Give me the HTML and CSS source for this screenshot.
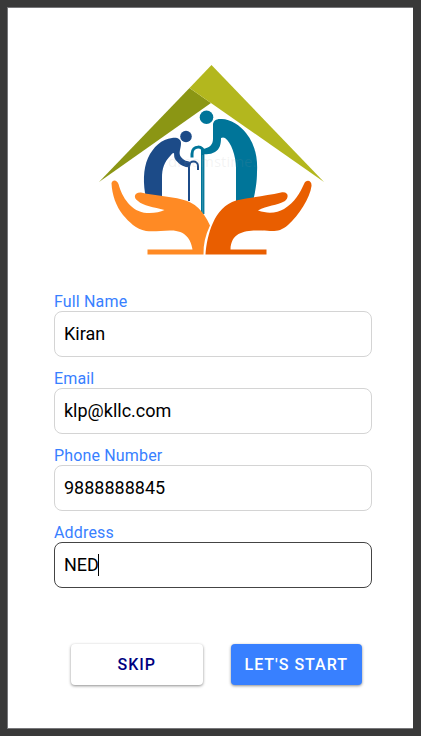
FILE: index.html
```html
<!DOCTYPE html>
<html lang="en">
<head>
<meta charset="utf-8">
<meta name="viewport" content="width=device-width, initial-scale=1">
<title>Profile details</title>
<link rel="stylesheet" href="styles.css">
</head>
<body>
<main class="screen">
  <svg class="logo" viewBox="90 60 240 200" role="img" aria-label="Two elderly people sheltered by a roof and two hands">
    <path fill="#8b9614" d="M188.500 88 98 182 210 103Z"/>
    <path fill="#b3b71e" d="M210.500 65 323 182 188.500 88Z"/>
    <g fill="#1c4b88">
      <circle cx="185" cy="136.500" r="5.800"/>
      <path d="M145 198C142 184 142 169 147 158C152 147 161 139 171 138C176 137 180 139 180 143C180 149 177 153 180 157C183 161 186 161 190 162L189 167C182 168 177 163 174 159Q173 157 173 153Q171 153 170 155C163 162 161 169 161 178V198Z"/>
    </g>
    <path fill="none" stroke="#1c4b88" stroke-width="2" d="M188 201V166C188 160 197 160 197 166V170"/>
    <g fill="#007599">
      <circle cx="205.500" cy="117.300" r="6.800"/>
      <path d="M212 125C212 121 215 119 219 119C228 118 239 125 245 133C253 143 257 156 256 172C256 184 254 192 252 202H235V168C235 156 230 142 224 138Q222 137 220 138C220 144 219 149 214 152Q209 155 202 154V149C208 148 212 145 212 139Z"/>
    </g>
    <path fill="none" stroke="#007599" stroke-width="3" d="M191 157.500V154C191 145 203 145 203 153"/>
    <path stroke="#007599" stroke-width="3.400" d="M201.700 149V214"/>
    <path stroke="#5aa9bd" stroke-width="0.600" d="M201.700 155V214"/>
    <text class="watermark" x="167" y="167">dreamstime.</text>
    <path fill="#ff8a24" d="M110.500 183C112 179 116 180 117.500 184C121 197 130 212 146 213C153 213.500 159 212 163.500 210C153 207 142 206 137 201C132 198 133 192 140 192.500C155 196 168 196 181 199.500Q199 203 209 225.500Q202 240 202.500 254.500H146.500V249.500H191.500C190 239 184 230 169 230.500C160 230.500 153 232 145 231C135 229 128 222 122 215C115 206 111 195 110.500 183Z"/>
    <path fill="#e95e00" d="M204.500 254.500C206 235 213 207 235 200.500C250 197 265 196 280 192.500C288 191 288 198 284 201C276 206 266 205 257 210.500C267 214 276 213 283 209C294 202 299 193 303 184C305 179 311 180 310.500 186C309 198 298 215 287 225C278 233 271 231 261 230.500C246 230 230 231 229.500 249.500H265.500V254.500Z"/>
  </svg>

  <form class="form">
    <div class="field">
      <label for="name">Full Name</label>
      <input id="name" type="text" value="Kiran">
    </div>
    <div class="field">
      <label for="email">Email</label>
      <input id="email" type="email" value="klp@kllc.com">
    </div>
    <div class="field">
      <label for="phone">Phone Number</label>
      <input id="phone" type="tel" value="9888888845">
    </div>
    <div class="field active">
      <label for="address">Address</label>
      <input id="address" type="text" value="NED">
      <span class="caret"></span>
    </div>
    <div class="actions">
      <button class="skip" type="button">SKIP</button>
      <button class="start" type="submit">LET'S START</button>
    </div>
  </form>
</main>
</body>
</html>
```
FILE: styles.css
```css
* {
  box-sizing: border-box;
}

body {
  margin: 0;
  min-height: 100vh;
  padding: 7px 8px 7px 7px;
  display: flex;
  background: #393939;
  font-family: Roboto, "Liberation Sans", sans-serif;
}

.screen {
  flex: 1;
  padding-top: 52px;
  background: #fff;
  border-top: 1px solid #77777a;
  border-left: 1px solid #77777a;
  border-bottom: 1px solid #77777a;
}

.logo {
  display: block;
  width: 240px;
  margin: 0 auto 32px;
}

.watermark {
  font: 15px "Open Sans", sans-serif;
  fill: #999;
  fill-opacity: 0.12;
}

.form {
  padding: 0 41px 0 46px;
}

.field {
  position: relative;
  margin-bottom: 12px;
}

.field label {
  display: block;
  line-height: 19px;
  font-size: 16px;
  letter-spacing: 0.01em;
  color: #3880ff;
}

.field input {
  display: block;
  width: 100%;
  height: 46px;
  padding: 0 9px 2px;
  border: 1px solid #d4d4d4;
  border-radius: 8px;
  outline: none;
  background: #fff;
  font: 18px/24px Roboto, "Liberation Sans", sans-serif;
  color: #000;
}

.field.active input {
  border-color: #444;
}

.caret {
  position: absolute;
  left: 44px;
  bottom: 12px;
  width: 1px;
  height: 22px;
  background: #000;
}

.actions {
  display: flex;
  gap: 28px;
  padding: 44px 10px 0 17px;
}

.actions button {
  flex: 1;
  height: 41px;
  padding: 0;
  border: 0;
  border-radius: 4px;
  font: 500 16px/20px Roboto, "Liberation Sans", sans-serif;
  letter-spacing: 1px;
  white-space: nowrap;
  box-shadow: 0 1px 3px rgba(0, 0, 0, 0.45);
}

.actions .skip {
  background: #fff;
  color: #000080;
}

.actions .start {
  background: #3880ff;
  color: #fff;
}
```
